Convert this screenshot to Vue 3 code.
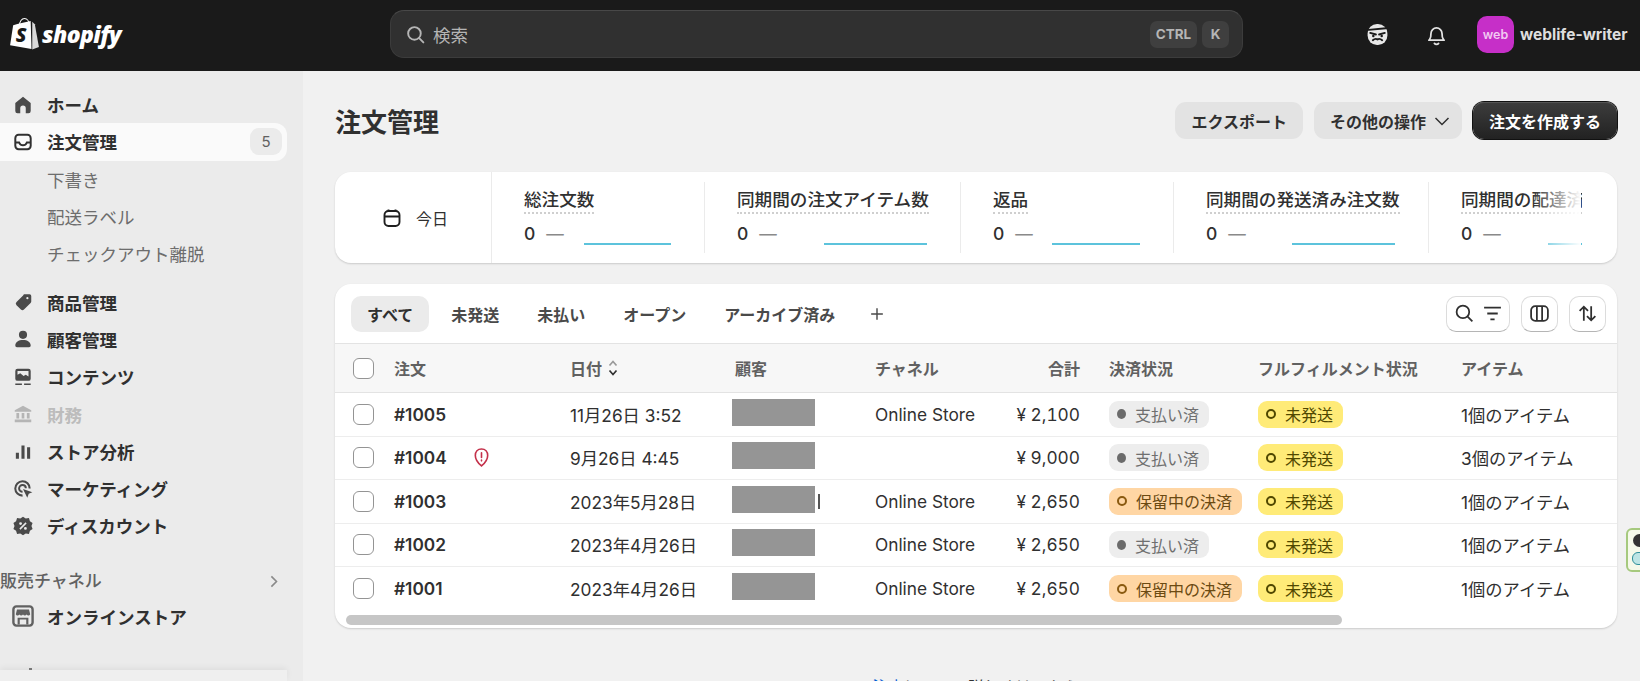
<template>
  <div class="app">
    <!-- Top bar -->
    <header class="topbar">
      <div class="brand">
        <svg class="bag" viewBox="0 0 28 33" aria-hidden="true">
          <path class="bag-handle" d="M9 9C9 4 11.500 1.500 14 1.500S18.500 4 18.500 8" />
          <path class="bag-left" d="M8 6.500 20 4l.8 27L0 27.500 3 8Z" />
          <path class="bag-right" d="M21.500 4.500 24 7l4 22-6.500 2.500Z" />
          <text class="bag-s" x="5.500" y="24">S</text>
        </svg>
        <span class="brand-name">shopify</span>
      </div>
      <div class="search">
        <svg class="search-icon" viewBox="0 0 20 20" aria-hidden="true">
          <circle cx="9" cy="9" r="6" />
          <path d="m13.500 13.500 4 4" />
        </svg>
        <span class="search-text">検索</span>
        <kbd class="key">CTRL</kbd>
        <kbd class="key key-k">K</kbd>
      </div>
      <div class="top-actions">
        <svg class="ninja" viewBox="0 0 24 24" aria-hidden="true">
          <rect x="2.500" y="2" width="19" height="20" rx="9" class="ninja-face" />
          <path class="ninja-mark" d="M3.500 7.500 20 6M5 10.500l5.500 1.500M19 10.500 13.500 12M7.500 17.500c2-1.800 3-1.800 4.500-.8 1.500-1 2.500-1 4.500.8" />
          <circle class="ninja-eye" cx="8" cy="13.500" r="1.200" />
          <circle class="ninja-eye" cx="16" cy="13.500" r="1.200" />
        </svg>
        <svg class="bell" viewBox="0 0 24 24" aria-hidden="true">
          <path d="M5.500 16.500c1-1.200 1.200-2.500 1.200-5.500a5.300 5.300 0 0 1 10.600 0c0 3 .2 4.300 1.200 5.500l.8 1H4.700Z" />
          <path d="M10 20.500c1 1.200 3 1.200 4 0" />
        </svg>
        <span class="avatar">web</span>
        <span class="shop-name">weblife-writer</span>
      </div>
    </header>

    <div class="layout">
      <!-- Sidebar -->
      <aside class="sidebar">
        <nav v-for="(group, i) in navGroups" :key="i" class="nav-group">
          <a
            v-for="item in group"
            :key="item.label"
            class="nav-item"
            :class="{ active: item.active, sub: item.sub, disabled: item.disabled }"
          >
            <svg v-if="item.icon" class="nav-icon" viewBox="0 0 20 20" aria-hidden="true">
              <path
                v-for="(p, j) in icons[item.icon]"
                :key="j"
                :d="p.d"
                :class="p.type"
                fill-rule="evenodd"
              />
            </svg>
            <span>{{ item.label }}</span>
            <span v-if="item.count" class="nav-count">{{ item.count }}</span>
          </a>
        </nav>
        <div class="channel-head">
          <span>販売チャネル</span>
          <svg viewBox="0 0 20 20" aria-hidden="true"><path d="m7.500 4 6 6-6 6" /></svg>
        </div>
        <a class="nav-item">
          <svg class="nav-icon store" viewBox="0 0 20 20" aria-hidden="true">
            <path
              v-for="(p, j) in icons.store"
              :key="j"
              :d="p.d"
              fill-rule="evenodd"
            />
          </svg>
          <span>オンラインストア</span>
        </a>
        <div class="side-foot"><i></i></div>
      </aside>

      <!-- Main -->
      <main class="main">
        <div class="page-head">
          <h1>注文管理</h1>
          <div class="page-actions">
            <button class="btn">エクスポート</button>
            <button class="btn btn-more">
              その他の操作
              <svg viewBox="0 0 20 20" aria-hidden="true"><path d="m3.500 7 6.500 6.500L16.500 7" /></svg>
            </button>
            <button class="btn btn-dark">注文を作成する</button>
          </div>
        </div>

        <section class="stats card">
          <div class="stat-date">
            <svg viewBox="0 0 20 20" aria-hidden="true">
              <rect x="2.500" y="3" width="15" height="15" rx="4" />
              <path d="M3 8.500h14M6.500 1.500V3M13.500 1.500V3" />
            </svg>
            <span>今日</span>
          </div>
          <div
            v-for="m in metrics"
            :key="m.label"
            class="stat"
            :class="{ last: m.last }"
            :style="{ width: m.width + 'px' }"
          >
            <div class="stat-label"><span>{{ m.label }}</span></div>
            <div class="stat-value">
              <span>0<em>—</em></span>
              <i class="spark" :style="{ width: m.spark + 'px' }"></i>
            </div>
          </div>
          <div class="stat-fade"></div>
        </section>

        <section class="orders card">
          <div class="tabs-row">
            <div class="tabs">
              <span v-for="(t, i) in tabs" :key="t" class="tab" :class="{ active: i === 0 }">{{ t }}</span>
              <svg class="tab-add" viewBox="0 0 20 20" aria-hidden="true"><path d="M10 3.500v13M3.500 10h13" /></svg>
            </div>
            <div class="tools">
              <button class="tool tool-wide">
                <svg viewBox="0 0 20 20" aria-hidden="true">
                  <circle cx="8.500" cy="8.500" r="6" />
                  <path d="m13 13 4.500 4.500" />
                </svg>
                <svg viewBox="0 0 20 20" aria-hidden="true"><path d="M2 4.500h16M5 10h10M8 15.500h4" /></svg>
              </button>
              <button class="tool">
                <svg viewBox="0 0 20 20" aria-hidden="true">
                  <rect x="2" y="3" width="16" height="14" rx="4" />
                  <path d="M7.500 3v14M12.500 3v14" />
                </svg>
              </button>
              <button class="tool">
                <svg viewBox="0 0 20 20" aria-hidden="true"><path d="M6.500 17V3.500m-4 4 4-4 4 4M13.500 3v13.500m-4-4 4 4 4-4" /></svg>
              </button>
            </div>
          </div>

          <div class="grid-row grid-head">
            <span class="check"></span>
            <span>注文</span>
            <span class="date-head">
              日付
              <svg viewBox="0 0 12 20" aria-hidden="true">
                <path class="sort-up" d="m2.500 7.500 3.500-4 3.500 4" />
                <path d="m2.500 12.500 3.500 4 3.500-4" />
              </svg>
            </span>
            <span class="head-customer">顧客</span>
            <span>チャネル</span>
            <span class="total">合計</span>
            <span class="pay-cell">決済状況</span>
            <span>フルフィルメント状況</span>
            <span>アイテム</span>
          </div>

          <div v-for="o in orders" :key="o.id" class="grid-row order-row">
            <span class="check"></span>
            <span class="order-id">
              <b>{{ o.id }}</b>
              <svg v-if="o.flag" class="flag" viewBox="0 0 20 22" aria-hidden="true">
                <path d="M10 2c4 0 6.500 3 6.500 6.800 0 4-3.300 8.400-6.500 11-3.200-2.600-6.500-7-6.500-11C3.500 5 6 2 10 2Z" />
                <path d="M10 6v5M10 13.800v.7" />
              </svg>
            </span>
            <span>{{ o.date }}</span>
            <span class="customer">
              <i class="redact"></i>
              <i v-if="o.caret" class="caret"></i>
            </span>
            <span>{{ o.channel }}</span>
            <span class="total">¥ {{ o.total }}</span>
            <span class="pay-cell">
              <span class="badge" :class="o.paid ? 'badge-paid' : 'badge-pending'">
                <i class="dot"></i>{{ o.paid ? '支払い済' : '保留中の決済' }}
              </span>
            </span>
            <span>
              <span class="badge badge-unfilled"><i class="dot"></i>未発送</span>
            </span>
            <span class="items">{{ o.items }}個のアイテム</span>
          </div>

          <div class="scroll-track"><div class="scroll-thumb"></div></div>
        </section>

        <p class="learn"><a>注文</a>について詳しくはこちら</p>
      </main>
    </div>

    <!-- Browser extension widget -->
    <div class="widget"><i class="widget-dot"></i><i class="widget-pill"></i></div>
  </div>
</template>

<script setup>
const icons = {
  home: [{ d: 'M10 2.500 17 8.200V15.500a2 2 0 0 1-2 2h-2.500V13a2.500 2.500 0 0 0-5 0v4.500H5a2 2 0 0 1-2-2V8.200Z' }],
  orders: [{ type: 'line', d: 'M6 3.500h8a3 3 0 0 1 3 3v7a3 3 0 0 1-3 3H6a3 3 0 0 1-3-3v-7a3 3 0 0 1 3-3ZM3 10.500h3.500c.8 1.700 2 2.500 3.500 2.500s2.700-.8 3.500-2.500H17' }],
  tag: [{ d: 'M11 3h5a1.500 1.500 0 0 1 1.500 1.500V9.500a2 2 0 0 1-.6 1.400l-6 6a2 2 0 0 1-2.800 0l-4-4a2 2 0 0 1 0-2.800l6-6A2 2 0 0 1 11 3ZM14 5.500a1 1 0 1 0 0 2 1 1 0 0 0 0-2Z' }],
  person: [{ d: 'M10 2.500a3.700 3.700 0 1 1 0 7.400 3.700 3.700 0 0 1 0-7.400ZM3 16c0-3.200 3-5 7-5s7 1.800 7 5c0 1-.7 1.500-1.500 1.500h-11C3.700 17.500 3 17 3 16Z' }],
  content: [{ d: 'M5 2.500h10a2 2 0 0 1 2 2v7a2 2 0 0 1-2 2H5a2 2 0 0 1-2-2v-7a2 2 0 0 1 2-2ZM5 4.500V8l2.500-1.500 3 2.500 2-1 2.500 1.500v-5ZM3 15.800h6v1.500H3ZM11 15.800h6v1.500h-6Z' }],
  bank: [{ d: 'M10 2.500 17.500 6.500V8h-15V6.500ZM4 9h2.500v5H4ZM8.800 9h2.400v5H8.800ZM13.500 9H16v5h-2.500ZM2.500 15h15v2.500h-15Z' }],
  bars: [{ d: 'M3.500 11.500h2.800v5.500H3.500ZM8.600 5h2.800v12H8.600ZM13.700 6.500h2.800V17h-2.800Z' }],
  target: [
    { d: 'M9.500 2a7.500 7.500 0 0 1 7.500 7.500h-1.900A5.600 5.600 0 1 0 9.600 15.100V17A7.500 7.500 0 0 1 9.500 2ZM9.500 5.500a4 4 0 0 1 4 3.800h-1.800A2.200 2.200 0 1 0 9.600 11.700v1.800a4 4 0 0 1-.1-8Z' },
    { d: 'M10 10l8.500 3-3.300 1.300-1.300 3.700Z' },
  ],
  discount: [
    { d: 'M10 1.500l2.500 1.600 2.900-.3.900 2.800 2.400 1.700-1 2.700 1 2.700-2.400 1.700-.9 2.800-2.900-.3L10 18.500l-2.500-1.600-2.900.3-.9-2.800-2.400-1.700 1-2.700-1-2.700 2.400-1.700.9-2.800 2.900.3Z' },
    { type: 'cut', d: 'M12.300 6.700 13.300 7.700 7.700 13.300 6.700 12.300ZM7.800 6.500a1.300 1.300 0 1 1 0 2.600 1.300 1.300 0 0 1 0-2.600ZM12.200 10.900a1.300 1.300 0 1 1 0 2.600 1.300 1.300 0 0 1 0-2.600Z' },
  ],
  store: [
    { d: 'M4.500 1h11A3.500 3.500 0 0 1 19 4.500v11a3.500 3.500 0 0 1-3.500 3.500h-11A3.500 3.500 0 0 1 1 15.500v-11A3.500 3.500 0 0 1 4.500 1ZM4.500 3A1.500 1.500 0 0 0 3 4.500v11A1.500 1.500 0 0 0 4.500 17h11a1.500 1.500 0 0 0 1.500-1.500v-11A1.500 1.500 0 0 0 15.500 3Z' },
    { d: 'M5 4.500h10l1 4c-.6 1.300-2.300 1.300-3 .2-.7 1.100-2.300 1.100-3 0-.7 1.100-2.300 1.100-3 0-.7 1.100-2.400 1.100-3-.2Z' },
    { d: 'M5.500 11.500h9V17h-1.800v-4H7.300v4H5.500Z' },
  ],
}

const navGroups = [
  [
    { label: 'ホーム', icon: 'home' },
    { label: '注文管理', icon: 'orders', active: true, count: 5 },
    { label: '下書き', sub: true },
    { label: '配送ラベル', sub: true },
    { label: 'チェックアウト離脱', sub: true },
  ],
  [
    { label: '商品管理', icon: 'tag' },
    { label: '顧客管理', icon: 'person' },
    { label: 'コンテンツ', icon: 'content' },
    { label: '財務', icon: 'bank', disabled: true },
    { label: 'ストア分析', icon: 'bars' },
    { label: 'マーケティング', icon: 'target' },
    { label: 'ディスカウント', icon: 'discount' },
  ],
]

const metrics = [
  { label: '総注文数', width: 213, spark: 87 },
  { label: '同期間の注文アイテム数', width: 256, spark: 103 },
  { label: '返品', width: 213, spark: 88 },
  { label: '同期間の発送済み注文数', width: 255, spark: 103 },
  { label: '同期間の配達済み注文数', width: 153, spark: 103, last: true },
]

const tabs = ['すべて', '未発送', '未払い', 'オープン', 'アーカイブ済み']

const orders = [
  { id: '#1005', date: '11月26日 3:52', channel: 'Online Store', total: '2,100', paid: true, items: 1 },
  { id: '#1004', date: '9月26日 4:45', channel: '', total: '9,000', paid: true, items: 3, flag: true },
  { id: '#1003', date: '2023年5月28日', channel: 'Online Store', total: '2,650', paid: false, items: 1, caret: true },
  { id: '#1002', date: '2023年4月26日', channel: 'Online Store', total: '2,650', paid: true, items: 1 },
  { id: '#1001', date: '2023年4月26日', channel: 'Online Store', total: '2,650', paid: false, items: 1 },
]
</script>

<style>
html,
body {
  margin: 0;
  background: #f1f1f1;
}
</style>

<style scoped>
.app {
  position: relative;
  width: 1640px;
  height: 681px;
  overflow: hidden;
  font-family: Inter, 'Noto Sans CJK JP', sans-serif;
  color: #303030;
  background: #f1f1f1;
}

svg {
  display: block;
  flex-shrink: 0;
}

/* top bar */
.topbar {
  display: flex;
  align-items: center;
  height: 71px;
  padding-bottom: 3px;
  box-sizing: border-box;
  background: #1a1a1a;
}

.brand {
  display: flex;
  align-items: center;
  width: 390px;
  padding-left: 10px;
  box-sizing: border-box;
  gap: 3px;
}

.bag {
  width: 29px;
  height: 34px;
}

.bag-handle {
  fill: none;
  stroke: #fff;
  stroke-width: 1;
}

.bag-left {
  fill: #fff;
}

.bag-right {
  fill: #d9d9d9;
}

.bag-s {
  font-family: 'Open Sans', sans-serif;
  font-size: 19px;
  font-weight: 800;
  font-style: italic;
  fill: #1a1a1a;
}

.brand-name {
  font-family: 'Open Sans', sans-serif;
  font-size: 23px;
  font-weight: 800;
  font-style: italic;
  letter-spacing: -0.6px;
  color: #fff;
}

.search {
  display: flex;
  align-items: center;
  width: 853px;
  height: 48px;
  padding: 0 13px 0 14px;
  box-sizing: border-box;
  background: #303030;
  border: 1px solid #3c3c3c;
  border-top-color: #484848;
  border-radius: 14px;
}

.search-icon {
  width: 21px;
  height: 21px;
  fill: none;
  stroke: #b5b5b5;
  stroke-width: 1.800;
  stroke-linecap: round;
}

.search-text {
  flex: 1;
  margin-left: 7px;
  font-size: 17.500px;
  color: #b5b5b5;
}

.key {
  display: flex;
  align-items: center;
  justify-content: center;
  width: 47px;
  height: 27px;
  font-family: inherit;
  font-size: 13.500px;
  font-weight: 700;
  color: #b5b5b5;
  background: #3f3f3f;
  border-radius: 7px;
}

.key-k {
  width: 27px;
  margin-left: 5px;
}

.top-actions {
  display: flex;
  align-items: center;
  flex: 1;
  padding-left: 122px;
}

.ninja {
  width: 25px;
  height: 25px;
}

.ninja-face {
  fill: #e8e8e8;
}

.ninja-mark {
  fill: none;
  stroke: #1a1a1a;
  stroke-width: 1.800;
  stroke-linecap: round;
}

.ninja-eye {
  fill: #1a1a1a;
}

.bell {
  width: 25px;
  height: 25px;
  margin-left: 34px;
  fill: none;
  stroke: #e3e3e3;
  stroke-width: 1.700;
  stroke-linejoin: round;
  stroke-linecap: round;
}

.avatar {
  display: flex;
  align-items: center;
  justify-content: center;
  width: 37px;
  height: 37px;
  margin-left: 28px;
  font-size: 12.500px;
  font-weight: 600;
  color: #f2c8f2;
  background: #c62fc8;
  border-radius: 10px;
}

.shop-name {
  margin-left: 6px;
  font-size: 15.500px;
  font-weight: 700;
  white-space: nowrap;
  color: #dedede;
}

/* layout */
.layout {
  display: flex;
  height: 610px;
}

.sidebar {
  position: relative;
  width: 303px;
  flex-shrink: 0;
  padding-top: 15px;
  box-sizing: border-box;
  background: #ebebeb;
}

.nav-group {
  margin-bottom: 11px;
}

.nav-item {
  display: flex;
  align-items: center;
  width: 287px;
  height: 37.300px;
  padding-left: 12px;
  box-sizing: border-box;
  font-size: 17.500px;
  font-weight: 700;
  color: #303030;
}

.nav-item.active {
  background: #fafafa;
  border-radius: 0 12px 12px 0;
}

.nav-item.sub {
  padding-left: 47px;
  font-weight: 400;
  color: #6d6d6d;
}

.nav-item.disabled {
  color: #bcbcbc;
}

.nav-icon {
  width: 22px;
  height: 22px;
  margin-right: 13px;
  fill: #4a4a4a;
}

.nav-icon .line {
  fill: none;
  stroke: #303030;
  stroke-width: 1.800;
}

.nav-icon .cut {
  fill: #ebebeb;
}

.nav-item.disabled .nav-icon {
  fill: #b5b5b5;
}

.nav-icon.store {
  width: 24px;
  height: 24px;
  margin: 0 12px 0 -1px;
  fill: #616161;
}

.nav-count {
  display: flex;
  align-items: center;
  justify-content: center;
  width: 32px;
  height: 27px;
  margin-left: auto;
  margin-right: 5px;
  font-size: 15px;
  font-weight: 400;
  color: #616161;
  background: #ebebeb;
  border-radius: 9px;
}

.channel-head {
  display: flex;
  align-items: center;
  justify-content: space-between;
  width: 287px;
  height: 37px;
  padding-right: 5px;
  box-sizing: border-box;
  margin-top: 16px;
  font-size: 17px;
  font-weight: 500;
  color: #616161;
}

.channel-head svg {
  width: 17px;
  height: 17px;
  margin-top: 5px;
  fill: none;
  stroke: #8a8a8a;
  stroke-width: 1.900;
}

.side-foot {
  position: absolute;
  left: 0;
  bottom: 0;
  width: 287px;
  height: 11px;
  background: #efefef;
  box-shadow: 0 -2px 6px rgba(0, 0, 0, 0.06);
}

.side-foot i {
  position: absolute;
  top: -2px;
  left: 29px;
  width: 3px;
  height: 2px;
  background: #777;
}

/* main */
.main {
  flex: 1;
  min-width: 0;
  padding: 31px 23px 0 32px;
}

.page-head {
  display: flex;
  align-items: center;
  justify-content: space-between;
  height: 37px;
}

h1 {
  margin: -1px 0 0;
  font-size: 26px;
  font-weight: 700;
  color: #303030;
}

.page-actions {
  display: flex;
  gap: 11px;
}

.btn {
  display: flex;
  align-items: center;
  height: 37px;
  padding: 0 16px;
  border: 0;
  font-family: inherit;
  font-size: 16px;
  font-weight: 700;
  color: #303030;
  background: #e3e3e3;
  border-radius: 11px;
}

.btn-more {
  padding-right: 10px;
}

.btn-more svg {
  width: 20px;
  height: 20px;
  margin-left: 6px;
  fill: none;
  stroke: #303030;
  stroke-width: 1.500;
}

.btn-dark {
  color: #fff;
  background: linear-gradient(#3d3d3d, #222);
  box-shadow: 0 0 0 1px #111, inset 0 1px 0 #555;
}

.card {
  background: #fff;
  border-radius: 16px;
  box-shadow: 0 1px 2px rgba(0, 0, 0, 0.16);
}

/* stats */
.stats {
  position: relative;
  display: flex;
  height: 91px;
  margin-top: 33px;
  overflow: hidden;
}

.stat-date {
  display: flex;
  align-items: center;
  width: 157px;
  flex-shrink: 0;
  padding-left: 47px;
  box-sizing: border-box;
  gap: 14px;
  font-size: 16px;
  border-right: 1px solid #ebebeb;
}

.stat-date svg {
  width: 20px;
  height: 20px;
  fill: none;
  stroke: #1f1f1f;
  stroke-width: 1.900;
}

.stat {
  flex-shrink: 0;
  position: relative;
  padding: 17px 34px 0 32px;
  box-sizing: border-box;
}

.stat::after {
  content: '';
  position: absolute;
  top: 10px;
  right: 0;
  bottom: 10px;
  width: 1px;
  background: #ebebeb;
}

.stat.last {
  overflow: hidden;
  padding-right: 0;
}

.stat.last::after {
  display: none;
}

.stat.last .stat-label,
.stat.last .stat-value {
  width: 190px;
}

.stat-label {
  font-size: 17.600px;
  font-weight: 500;
  line-height: 22px;
  white-space: nowrap;
}

.stat-label span {
  display: inline-block;
  border-bottom: 2px dotted #cfcfcf;
  padding-bottom: 1px;
}

.stat-value {
  display: flex;
  align-items: flex-end;
  justify-content: space-between;
  height: 25px;
  margin-top: 9px;
  font-size: 17.500px;
  font-weight: 500;
}

.stat-value > span {
  line-height: 22px;
  margin-bottom: 3px;
}

.stat-value em {
  margin-left: 11px;
  font-style: normal;
  font-weight: 400;
  color: #8a8a8a;
}

.spark {
  height: 2px;
  margin-bottom: 3px;
  flex-shrink: 0;
  background: #5cc3dc;
}

.stat-fade {
  position: absolute;
  top: 0;
  right: 36px;
  bottom: 0;
  width: 48px;
  background: linear-gradient(to right, rgba(255, 255, 255, 0), #fff);
}

/* orders */
.orders {
  margin-top: 21px;
  height: 344px;
  overflow: hidden;
}

.tabs-row {
  display: flex;
  align-items: center;
  justify-content: space-between;
  height: 59px;
  padding: 0 11px 0 16px;
  box-sizing: border-box;
}

.tabs {
  display: flex;
  align-items: center;
  gap: 6px;
}

.tab {
  display: flex;
  align-items: center;
  height: 36px;
  padding: 0 16px;
  font-size: 16px;
  font-weight: 700;
  color: #4a4a4a;
  border-radius: 10px;
}

.tab.active {
  color: #303030;
  background: #ebebeb;
}

.tab-add {
  width: 18px;
  height: 18px;
  margin-left: 11px;
  fill: none;
  stroke: #4a4a4a;
  stroke-width: 1.600;
}

.tools {
  display: flex;
  gap: 11px;
}

.tool {
  display: flex;
  align-items: center;
  justify-content: center;
  width: 37px;
  height: 36px;
  padding: 0;
  gap: 7px;
  background: #fff;
  border: 1px solid #dcdcdc;
  border-bottom-color: #b5b5b5;
  border-radius: 10px;
}

.tool-wide {
  width: 64px;
}

.tool svg {
  width: 21px;
  height: 21px;
  fill: none;
  stroke: #303030;
  stroke-width: 1.700;
}

.grid-row {
  display: grid;
  grid-template-columns: 41px 176px 162px 143px 98px 107px 178px 203px 1fr;
  align-items: center;
  padding-left: 18px;
  font-size: 17.300px;
  white-space: nowrap;
}

.grid-head {
  height: 50px;
  box-sizing: border-box;
  font-size: 16px;
  font-weight: 700;
  color: #616161;
  background: #f7f7f7;
  border-top: 1px solid #e3e3e3;
  border-bottom: 1px solid #e3e3e3;
}

.head-customer {
  padding-left: 3px;
}

.date-head {
  display: flex;
  align-items: center;
  gap: 5px;
}

.date-head svg {
  width: 12px;
  height: 20px;
  fill: none;
  stroke: #303030;
  stroke-width: 1.700;
}

.date-head .sort-up {
  stroke: #9a9a9a;
}

.order-row {
  height: 43.500px;
  box-sizing: border-box;
  border-bottom: 1px solid #ededed;
}

.order-row:nth-last-child(2) {
  border-bottom: 0;
}

.check {
  display: block;
  width: 21px;
  height: 21px;
  box-sizing: border-box;
  background: #fff;
  border: 1.500px solid #949494;
  border-radius: 6px;
}

.order-id {
  display: flex;
  align-items: center;
}

.order-id b {
  width: 78px;
  font-weight: 600;
}

.flag {
  width: 19px;
  height: 21px;
  fill: none;
  stroke: #c4314b;
  stroke-width: 1.700;
  stroke-linecap: round;
}

.customer {
  display: flex;
  align-items: center;
  gap: 3px;
}

.redact {
  display: block;
  width: 83px;
  height: 27px;
  margin-bottom: 4px;
  background: #959595;
}

.caret {
  display: block;
  width: 2px;
  height: 15px;
  background: #555;
}

.total {
  text-align: right;
  font-variant-numeric: tabular-nums;
}

.pay-cell {
  padding-left: 29px;
}

.badge {
  display: inline-flex;
  align-items: center;
  height: 27px;
  padding: 0 10px 0 8px;
  font-size: 16px;
  border-radius: 9px;
  vertical-align: middle;
}

.dot {
  display: block;
  width: 10px;
  height: 10px;
  margin-right: 9px;
  box-sizing: border-box;
  border-radius: 50%;
}

.badge-paid {
  width: 100px;
  box-sizing: border-box;
  color: #6f6f6f;
  background: #ededed;
}

.badge-paid .dot {
  background: #6b6b6b;
}

.badge-pending {
  width: 133px;
  box-sizing: border-box;
  color: #6b4a12;
  background: #ffd6a4;
}

.badge-pending .dot {
  border: 2px solid #8a5a10;
}

.badge-unfilled {
  width: 85px;
  box-sizing: border-box;
  color: #4f4700;
  background: #ffeb78;
}

.badge-unfilled .dot {
  border: 2px solid #4f4700;
}

.scroll-track {
  padding: 4.500px 0 0 11px;
}

.scroll-thumb {
  width: 996px;
  height: 10px;
  background: #c6c6c6;
  border-radius: 5px;
}

.learn {
  margin: 49px 0 0;
  font-size: 16px;
  line-height: 20px;
  text-align: center;
  color: #303030;
}

.learn a {
  color: #005bd3;
}

/* overlay from a browser extension, hangs off the right edge */
.widget {
  position: absolute;
  top: 528px;
  left: 1626px;
  width: 30px;
  height: 44px;
  box-sizing: border-box;
  background: #f5f9ea;
  border: 2px solid #a6c97e;
  border-radius: 6px;
}

.widget-dot {
  position: absolute;
  top: 4px;
  left: 5px;
  width: 13px;
  height: 13px;
  background: #333;
  border-radius: 50%;
}

.widget-pill {
  position: absolute;
  top: 22px;
  left: 4px;
  width: 20px;
  height: 13px;
  background: #bde5e5;
  border: 1px solid #2f8f9a;
  border-radius: 6px;
  box-sizing: border-box;
}
</style>
